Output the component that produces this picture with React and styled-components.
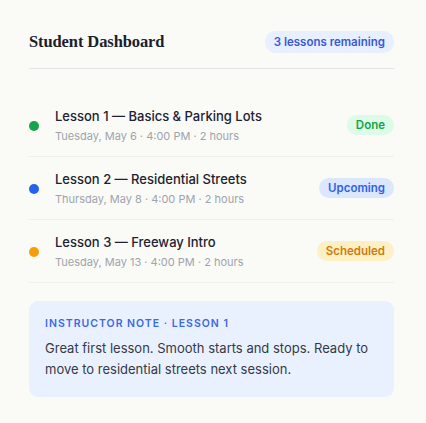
import React from "react"
import styled, { createGlobalStyle } from "styled-components"

const GlobalStyle = createGlobalStyle`
  html, body {
    margin: 0;
    padding: 0;
    background: #fafaf7;
  }
  body {
    font-family: "Inter", "Liberation Sans", sans-serif;
    color: #1f2430;
  }
`

const Page = styled.div`
  padding: 31px 32px 28px 29px;
`

const Header = styled.header`
  display: flex;
  justify-content: space-between;
  align-items: center;
  padding-bottom: 15px;
  border-bottom: 1px solid #e4e4e4;
`

const Title = styled.h1`
  margin: 0;
  font-family: "Liberation Serif", "DejaVu Serif", serif;
  font-size: 16.5px;
  font-weight: 700;
  letter-spacing: -0.1px;
  color: #1a1f2b;
`

const Pill = styled.span`
  display: inline-flex;
  align-items: center;
  height: 22px;
  padding: 0 9px;
  border-radius: 11px;
  background: #e8effe;
  color: #3a5ad8;
  font-size: 11.5px;
  font-weight: 600;
`

const List = styled.ul`
  list-style: none;
  margin: 25px 0 0;
  padding: 0;
`

const Row = styled.li`
  display: flex;
  align-items: center;
  gap: 16px;
  height: 62px;
  border-bottom: 1px solid #efefeb;
`

const Dot = styled.span`
  flex: none;
  width: 10px;
  height: 10px;
  border-radius: 50%;
  background: ${({ $color }) => $color};
  margin-top: 1px;
`

const Info = styled.div`
  flex: 1;
  display: flex;
  flex-direction: column;
  gap: 5px;
`

const LessonTitle = styled.div`
  font-size: 13px;
  font-weight: 500;
  color: #1d2230;
`

const Meta = styled.div`
  font-size: 11px;
  color: #a0a4ad;
`

const Badge = styled.span`
  display: inline-flex;
  align-items: center;
  height: 20px;
  padding: 0 9px;
  border-radius: 10px;
  font-size: 11.5px;
  font-weight: 600;
  background: ${({ $bg }) => $bg};
  color: ${({ $fg }) => $fg};
`

const Note = styled.section`
  margin-top: 18px;
  padding: 16px 16px 17px;
  border-radius: 9px;
  background: #eaf1fe;
`

const NoteLabel = styled.div`
  font-size: 10.5px;
  font-weight: 600;
  letter-spacing: 1px;
  text-transform: uppercase;
  color: #3d68e6;
`

const NoteText = styled.p`
  margin: 8px 0 0;
  font-size: 13px;
  line-height: 21px;
  color: #343a46;
`

const lessons = [
  {
    title: "Lesson 1 — Basics & Parking Lots",
    meta: "Tuesday, May 6 · 4:00 PM · 2 hours",
    dot: "#16a34a",
    status: "Done",
    bg: "#dcfce7",
    fg: "#15a34a",
  },
  {
    title: "Lesson 2 — Residential Streets",
    meta: "Thursday, May 8 · 4:00 PM · 2 hours",
    dot: "#2563eb",
    status: "Upcoming",
    bg: "#dbe7fe",
    fg: "#2f62e8",
  },
  {
    title: "Lesson 3 — Freeway Intro",
    meta: "Tuesday, May 13 · 4:00 PM · 2 hours",
    dot: "#f59e0b",
    status: "Scheduled",
    bg: "#fdf0c4",
    fg: "#d27a0a",
  },
]

export default function App() {
  return (
    <Page>
      <GlobalStyle />
      <Header>
        <Title>Student Dashboard</Title>
        <Pill>3 lessons remaining</Pill>
      </Header>
      <List>
        {lessons.map((l) => (
          <Row key={l.title}>
            <Dot $color={l.dot} />
            <Info>
              <LessonTitle>{l.title}</LessonTitle>
              <Meta>{l.meta}</Meta>
            </Info>
            <Badge $bg={l.bg} $fg={l.fg}>{l.status}</Badge>
          </Row>
        ))}
      </List>
      <Note>
        <NoteLabel>Instructor Note · Lesson 1</NoteLabel>
        <NoteText>
          Great first lesson. Smooth starts and stops. Ready to move to
          residential streets next session.
        </NoteText>
      </Note>
    </Page>
  )
}
